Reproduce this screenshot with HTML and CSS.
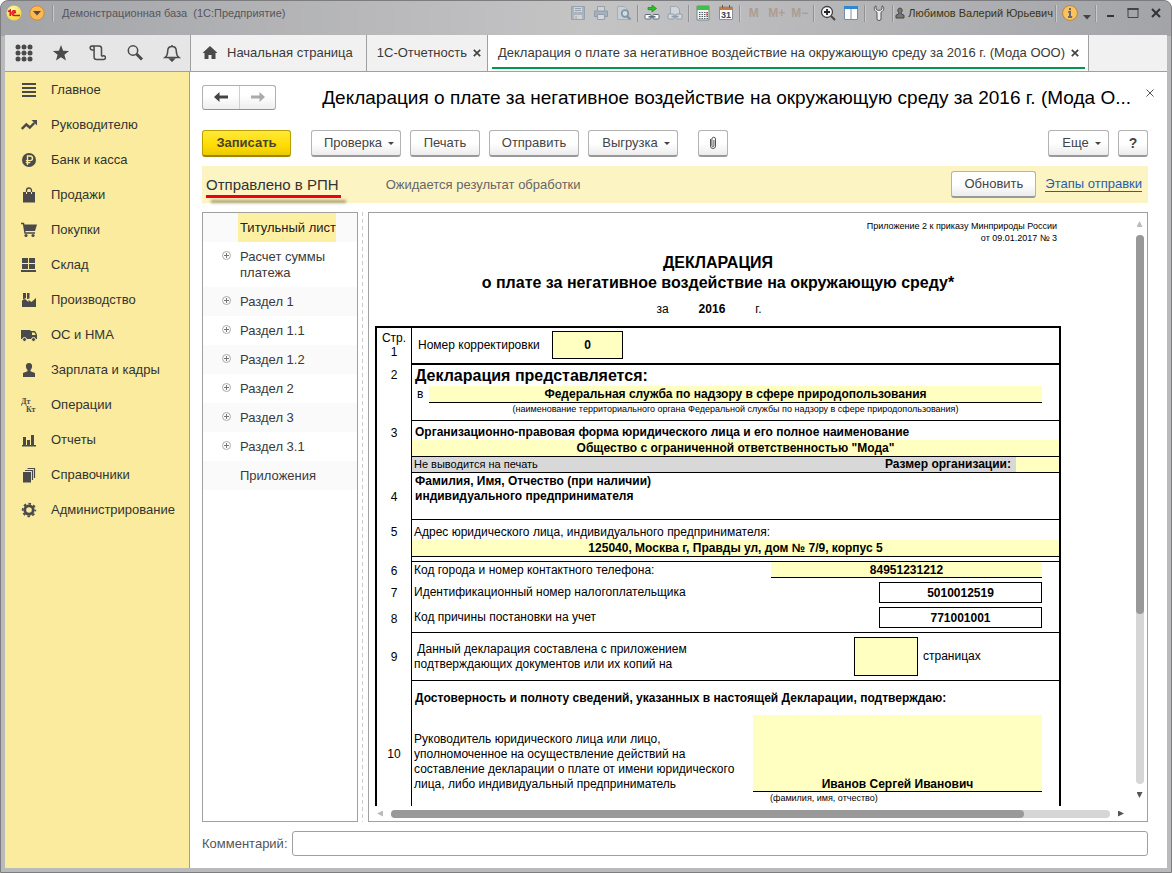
FILE: index.html
```html
<!DOCTYPE html>
<html lang="ru">
<head>
<meta charset="utf-8">
<title>Демонстрационная база (1С:Предприятие)</title>
<link rel="stylesheet" href="styles.css">
</head>
<body>
<div class="window">
  <header class="titlebar">
    <svg class="logo" viewBox="0 0 16 16" width="16" height="16"><defs><radialGradient id="lg" cx=".4" cy=".3" r=".8"><stop offset="0" stop-color="#fffbb0"/><stop offset="1" stop-color="#f5cf1e"/></radialGradient></defs><circle cx="8" cy="8" r="7.5" fill="url(#lg)"/><path d="M2 6.700 4.200 5.200v5.800M9.800 6.500a2.300 2.300 0 1 0-1.800 3.900h6M9.500 8.200A.9.9 0 1 0 8.300 9" fill="none" stroke="#d8141c" stroke-width="1.500"/></svg>
    <button class="round" aria-label="Главное меню"><svg viewBox="0 0 16 16" width="16" height="16"><circle cx="8" cy="8" r="7.200" fill="#fbb954" stroke="#c98a3a"/><path d="M4 6h8L8 10.500z" fill="#5a4a3a"/></svg></button>
    <span class="sep"></span>
    <span class="app-name">Демонстрационная база&nbsp; (1С:Предприятие)</span>
    <div class="tools">
      <button class="tool faded" aria-label="Сохранить"><svg viewBox="0 0 16 16" width="16" height="16"><path d="M1.500 1.500h13v13h-13z" fill="#a3b1bf" stroke="#8a9bab"/><path d="M4 2h8v5H4zM4 10h8v4H4z" fill="#d3d8dd"/><path d="M5 3.500h6M5 5.500h6M6 11v3" stroke="#8a9bab"/></svg></button>
      <button class="tool faded" aria-label="Печать"><svg viewBox="0 0 16 16" width="16" height="16"><path d="M4.500 6V1.500h7V6" fill="#d3d8dd" stroke="#8a97a5"/><path d="M1.500 6h13v5.500h-13z" fill="#a0adba" stroke="#8393a2"/><path d="M4.500 9.500h7v5h-7z" fill="#d9dde1" stroke="#8a97a5"/></svg></button>
      <button class="tool faded" aria-label="Просмотр"><svg viewBox="0 0 16 16" width="16" height="16"><path d="M1.500 1.500h7l3 3v10h-10z" fill="#c9d2d9" stroke="#9aabb8"/><circle cx="9" cy="8.500" r="3.300" fill="#d5e2ea" stroke="#71899a" stroke-width="1.700"/><path d="m11 11 3.500 3.500" stroke="#71899a" stroke-width="2.200"/></svg></button>
      <span class="sep"></span>
      <button class="tool" aria-label="Получить ссылку"><svg viewBox="0 0 16 16" width="16" height="16"><path d="M4 2.500h4V0l4.500 3.500L8 7V4.700H4z" fill="#27c427" stroke="#147a14" stroke-width=".6"/><rect x="1" y="9.500" width="6" height="4.500" rx="1" fill="#fff" stroke="#5d6c7c"/><rect x="9" y="9.500" width="6" height="4.500" rx="1" fill="#fff" stroke="#5d6c7c"/><path d="M4.500 11.800h7" stroke="#5d6c7c" stroke-width="1.500"/></svg></button>
      <button class="tool faded" aria-label="Перейти по ссылке"><svg viewBox="0 0 16 16" width="16" height="16"><path d="M3.500 9V1.500h6l3 2.500v5" fill="#d6dce1" stroke="#94a2b0"/><rect x="1" y="9" width="6" height="5" rx="1" fill="#dde1e5" stroke="#8293a4"/><rect x="9" y="9" width="6" height="5" rx="1" fill="#dde1e5" stroke="#8293a4"/><path d="M4.500 11.500h7" stroke="#8293a4" stroke-width="1.500"/></svg></button>
      <span class="sep"></span>
      <button class="tool" aria-label="Калькулятор"><svg viewBox="0 0 16 16" width="16" height="16"><path d="M2 1h12v14H2z" fill="#f3f3f3" stroke="#74897a"/><path d="M2 1h12v4H2z" fill="#3fbf4c"/><path d="M4 7.500h9M4 9.500h9M4 11.500h9M4 13.500h9" stroke="#53606a" stroke-dasharray="1.500 1"/><path d="M12 7v4" stroke="#e04b3a"/></svg></button>
      <button class="tool" aria-label="Календарь"><svg viewBox="0 0 16 16" width="16" height="16"><path d="M1.500 2h13v12.500h-13z" fill="#fff" stroke="#8a8f96"/><path d="M1.500 2h13v3h-13z" fill="#c9783f"/><path d="M4.500 0v3M11.500 0v3" stroke="#8a5430"/><text x="8" y="13" text-anchor="middle" class="cal">31</text></svg></button>
      <span class="sep"></span>
      <button class="tool mem">M</button><button class="tool mem">M+</button><button class="tool mem">M−</button>
      <span class="sep"></span>
      <button class="tool" aria-label="Масштаб"><svg viewBox="0 0 16 16" width="16" height="16"><circle cx="7" cy="7" r="5.500" fill="#f6f6f6" stroke="#444" stroke-width="1.300"/><path d="M4 7h6M7 4v6" stroke="#222" stroke-width="1.800"/><path d="m11 11 4 4" stroke="#444" stroke-width="2"/></svg></button>
      <button class="tool" aria-label="Панели"><svg viewBox="0 0 16 16" width="16" height="16"><path d="M1.500 1.500h13v13h-13z" fill="#fff" stroke="#6d8faa"/><path d="M1 1h14v3H1z" fill="#3487cf"/><path d="M8 4v11" stroke="#7d93a5"/></svg></button>
      <span class="sep"></span>
      <button class="tool" aria-label="Настройки"><svg viewBox="0 0 16 16" width="16" height="16"><path d="M5 .8C2.500 1.800 2.500 5.500 6 7.300V14q0 1.500 2 1.500t2-1.500V7.300c3.500-1.800 3.500-5.500 1-6.500V4L9.500 5.200h-3L5 4z" fill="#eee" stroke="#555"/></svg></button>
      <span class="sep"></span>
      <button class="user"><svg viewBox="0 0 10 12" width="10" height="12"><path d="M5 1a2.200 2.500 0 0 1 1.300 4.500V7L9 8.200V11H1V8.200L3.700 7V5.500A2.200 2.500 0 0 1 5 1z" fill="#777" stroke="#444"/></svg><span>Любимов Валерий Юрьевич</span></button>
      <span class="sep"></span>
      <button class="tool" aria-label="Справка"><svg viewBox="0 0 16 16" width="16" height="16"><circle cx="8" cy="8" r="7.400" fill="#fbc35f" stroke="#b98637"/><path d="M8 3v2.200M6.300 7H8v5M6 12h4.200" fill="none" stroke="#6a6a6a" stroke-width="2"/></svg></button>
      <button class="more" aria-label="Ещё"><svg viewBox="0 0 8 5" width="8" height="5"><path d="M0 0h8L4 4.500z" fill="#444"/></svg></button>
      <span class="sep"></span>
      <button class="tool" aria-label="Свернуть"><svg viewBox="0 0 12 12" width="12" height="12"><path d="M3 9h7" stroke="#333" stroke-width="2"/></svg></button>
      <button class="tool" aria-label="Развернуть"><svg viewBox="0 0 12 12" width="12" height="12"><path d="M1 1.500h10v9H1z" fill="none" stroke="#444"/><path d="M.5 2h11" stroke="#444" stroke-width="2"/></svg></button>
      <button class="tool" aria-label="Закрыть"><svg viewBox="0 0 12 12" width="12" height="12"><path d="m2 2 8 8M10 2l-8 8" stroke="#333" stroke-width="2"/></svg></button>
    </div>
  </header>

  <nav class="tabs">
    <div class="quick">
      <button aria-label="Разделы"><svg viewBox="0 0 18 18" width="18" height="18" fill="#4a4a4a"><circle cx="3" cy="3" r="2.500"/><circle cx="9" cy="3" r="2.500"/><circle cx="15" cy="3" r="2.500"/><circle cx="3" cy="9" r="2.500"/><circle cx="9" cy="9" r="2.500"/><circle cx="15" cy="9" r="2.500"/><circle cx="3" cy="15" r="2.500"/><circle cx="9" cy="15" r="2.500"/><circle cx="15" cy="15" r="2.500"/></svg></button>
      <button aria-label="Избранное"><svg viewBox="0 0 18 18" width="18" height="18"><path d="m9 1 2.100 5.700 6 .3-4.700 3.700L14 16.500 9 13.200 4 16.500l1.600-5.800L.9 7l6-.3z" fill="#4a4a4a"/></svg></button>
      <button aria-label="История"><svg viewBox="0 0 18 18" width="18" height="18" fill="none" stroke="#4a4a4a" stroke-width="1.500"><path d="M5 6H3.200a2 2 0 1 1 1.900-2.500V13a2.500 2.500 0 0 0 2.500 2.500h7a1.900 1.900 0 1 0-1.800-2.600M3.200 2H10a2.500 2.500 0 0 1 2.500 2.500V12"/></svg></button>
      <button aria-label="Поиск"><svg viewBox="0 0 18 18" width="18" height="18" fill="none" stroke="#4a4a4a"><circle cx="7" cy="6.500" r="4.700" stroke-width="1.500"/><path d="m10.500 10 5.500 5.500" stroke-width="3"/></svg></button>
      <button aria-label="Оповещения"><svg viewBox="0 0 18 18" width="18" height="18" fill="none" stroke="#4a4a4a" stroke-width="1.500"><path d="M9 2.500c-3 0-4.300 2.200-4.300 4.700 0 3.500-1 5-2.700 6.300h14c-1.700-1.300-2.700-2.800-2.700-6.300 0-2.500-1.300-4.700-4.300-4.700zM9 1v1.500"/><path d="M7 15h4l-2 2z" fill="#4a4a4a"/></svg></button>
    </div>
    <a class="tab home" href="#"><svg viewBox="0 0 16 14" width="16" height="14"><path d="M8 0 .5 7h2v6h4V9h3v4h4V7h2z" fill="#4a4a4a"/></svg>Начальная страница</a>
    <div class="tab"><a href="#">1С-Отчетность</a><button class="tab-x" aria-label="Закрыть вкладку"><svg viewBox="0 0 8 8" width="8" height="8"><path d="m.8.800 6.400 6.400M7.200.8.800 7.200" stroke="#444" stroke-width="1.700"/></svg></button></div>
    <div class="tab active"><a href="#">Декларация о плате за негативное воздействие на окружающую среду за 2016 г. (Мода ООО)</a><button class="tab-x" aria-label="Закрыть вкладку"><svg viewBox="0 0 8 8" width="8" height="8"><path d="m.8.800 6.400 6.400M7.200.8.800 7.200" stroke="#444" stroke-width="1.700"/></svg></button></div>
  </nav>

  <div class="body">
    <nav class="sidebar">
      <a href="#"><svg viewBox="0 0 16 16"><path d="M1 2h14M1 6h14M1 10h14M1 14h14" stroke="#4a4a4a" stroke-width="2"/></svg>Главное</a>
      <a href="#"><svg viewBox="0 0 16 16"><path d="m.8 12 4.500-4.500 3.500 3 4.500-4.500" fill="none" stroke="#4a4a4a" stroke-width="2.400"/><path d="M10.500 3H16v5.500z" fill="#4a4a4a"/></svg>Руководителю</a>
      <a href="#"><svg viewBox="0 0 16 16"><circle cx="8" cy="8" r="7" fill="#4a4a4a"/><path d="M6.500 13V4h2.700a2.200 2.200 0 0 1 0 4.600H4.800M4.800 10.600h4.500" fill="none" stroke="#faeb9e" stroke-width="1.400"/></svg>Банк и касса</a>
      <a href="#"><svg viewBox="0 0 16 16"><path d="M2 5h12v10.500H2z" fill="#4a4a4a"/><path d="M5.500 8V3.500a2.500 2.500 0 0 1 5 0V8" fill="none" stroke="#4a4a4a" stroke-width="1.300"/><path d="M5.500 5v2M10.500 5v2" stroke="#faeb9e"/></svg>Продажи</a>
      <a href="#"><svg viewBox="0 0 16 16"><path d="M0 1.500h2.500L4 11h10" fill="none" stroke="#4a4a4a" stroke-width="1.400"/><path d="M2.500 2.500H16L14 9H4z" fill="#4a4a4a"/><circle cx="5" cy="13.500" r="1.600" fill="#4a4a4a"/><circle cx="12" cy="13.500" r="1.600" fill="#4a4a4a"/></svg>Покупки</a>
      <a href="#"><svg viewBox="0 0 16 16"><path d="M1 1h6v5H1zM8 1h6v5H8zM1 7h6v5H1zM8 7h6v5H8zM0 13h15v2H0z" fill="#4a4a4a"/></svg>Склад</a>
      <a href="#"><svg viewBox="0 0 16 16"><path d="M1 15V8.500L4 7l3.500 3V8l3 2L15 6v9zM2 1h3v5L2 7.500zM6 1h2.500v5.500L6 7z" fill="#4a4a4a"/></svg>Производство</a>
      <a href="#"><svg viewBox="0 0 16 16"><path d="M0 3h9.500v9H0zM9.500 4H14l2 3.500V12H9.500z" fill="#4a4a4a"/><path d="M11 5.500h2.300L14.800 8H11z" fill="#faeb9e"/><g fill="#4a4a4a" stroke="#faeb9e"><circle cx="3.500" cy="12.500" r="2"/><circle cx="12.500" cy="12.500" r="2"/></g></svg>ОС и НМА</a>
      <a href="#"><svg viewBox="0 0 16 16"><path d="M8 1c2.200 0 3.300 1.700 3.100 3.600C11 6.300 10 7.500 9.500 8v1.200L14 11v4H2v-4l4.500-1.800V8C6 7.500 5 6.300 4.900 4.600 4.700 2.700 5.800 1 8 1z" fill="#4a4a4a"/></svg>Зарплата и кадры</a>
      <a href="#"><svg viewBox="0 0 16 16"><text x="0" y="7" class="dk">Дт</text><text x="5" y="15" class="dk">Кт</text></svg>Операции</a>
      <a href="#"><svg viewBox="0 0 16 16"><path d="M1 13h14v1.500H1zM2 5h3v8H2zM6 8h3v5H6zM10 3h3v10h-3z" fill="#4a4a4a"/></svg>Отчеты</a>
      <a href="#"><svg viewBox="0 0 16 16"><path d="M2 5h8v10.500H2z" fill="#4a4a4a"/><path d="M4 3.500h7.500V13M6.500 1.500h7V11" fill="none" stroke="#4a4a4a" stroke-width="1.200"/></svg>Справочники</a>
      <a href="#"><svg viewBox="0 0 16 16"><circle cx="8" cy="8" r="4.200" fill="none" stroke="#4a4a4a" stroke-width="2.800"/><circle cx="8" cy="8" r="6.300" fill="none" stroke="#4a4a4a" stroke-width="1.800" stroke-dasharray="2.600 2.350" stroke-dashoffset="1.300"/></svg>Администрирование</a>
    </nav>

    <main class="main">
      <div class="heading">
        <div class="history">
          <button aria-label="Назад"><svg viewBox="0 0 14 10" width="14" height="10"><path d="M0 5 5.500 0v3.600H14v2.800H5.500V10z" fill="#444"/></svg></button>
          <button aria-label="Вперед"><svg viewBox="0 0 14 10" width="14" height="10"><path d="M14 5 8.500 0v3.600H0v2.800h8.500V10z" fill="#aaa"/></svg></button>
        </div>
        <h1>Декларация о плате за негативное воздействие на окружающую среду за 2016 г. (Мода О...</h1>
        <button class="form-x" aria-label="Закрыть"><svg viewBox="0 0 8 8" width="8" height="8"><path d="m.5.500 7 7M7.500.500l-7 7" stroke="#555"/></svg></button>
      </div>

      <div class="toolbar">
        <button class="btn primary">Записать</button>
        <span class="space"></span>
        <button class="btn wide menu">Проверка<i class="caret"></i></button>
        <button class="btn">Печать</button>
        <button class="btn wide">Отправить</button>
        <button class="btn wide menu">Выгрузка<i class="caret"></i></button>
        <span class="space"></span>
        <button class="btn square" aria-label="Файлы"><svg viewBox="0 0 8 14" width="8" height="14"><path d="M1.500 3v7a2.500 2.500 0 0 0 5 0V3a1.800 1.800 0 0 0-3.600 0v6.500a1 1 0 0 0 2 0V4" fill="none" stroke="#555"/></svg></button>
        <span class="grow"></span>
        <button class="btn small menu">Еще<i class="caret"></i></button>
        <button class="btn square help">?</button>
      </div>

      <div class="status">
        <strong>Отправлено в РПН</strong>
        <span>Ожидается результат обработки</span>
        <button class="btn refresh">Обновить</button>
        <a href="#">Этапы отправки</a>
      </div>

      <div class="split">
        <ul class="tree">
          <li class="leaf selected"><span>Титульный лист</span></li>
          <li><button class="plus" aria-label="Развернуть"></button><span>Расчет суммы<br>платежа</span></li>
          <li><button class="plus" aria-label="Развернуть"></button><span>Раздел 1</span></li>
          <li><button class="plus" aria-label="Развернуть"></button><span>Раздел 1.1</span></li>
          <li><button class="plus" aria-label="Развернуть"></button><span>Раздел 1.2</span></li>
          <li><button class="plus" aria-label="Развернуть"></button><span>Раздел 2</span></li>
          <li><button class="plus" aria-label="Развернуть"></button><span>Раздел 3</span></li>
          <li><button class="plus" aria-label="Развернуть"></button><span>Раздел 3.1</span></li>
          <li class="leaf"><span>Приложения</span></li>
        </ul>
        <div class="splitter"></div>
        <section class="doc">
          <div class="view">
            <div class="sheet">
              <p class="appendix">Приложение 2 к приказу Минприроды России<br>от 09.01.2017 № 3</p>
              <h2>ДЕКЛАРАЦИЯ<br>о плате за негативное воздействие на окружающую среду*</h2>
              <p class="year"><span>за</span><b>2016</b><span>г.</span></p>
              <table class="form">
                <tr class="r1"><th class="top">Стр.<br>1</th><td><div class="line"><label for="corr">Номер корректировки</label><input id="corr" class="box corr" value="0"></div></td></tr>
                <tr class="r2"><th class="top">2</th><td><h3>Декларация представляется:</h3><div class="line"><label class="in" for="org">в</label><input id="org" class="under grow" value="Федеральная служба по надзору в сфере природопользования"></div><small>(наименование территориального органа Федеральной службы по надзору в сфере природопользования)</small></td></tr>
                <tr class="r3"><th class="top">3</th><td><label class="cap bold" for="name">Организационно-правовая форма юридического лица и его полное наименование</label><input id="name" class="full" value="Общество с ограниченной ответственностью &quot;Мода&quot;"></td></tr>
                <tr class="size"><th></th><td><div class="line"><span class="noprint">Не выводится на печать</span><label class="bold" for="size">Размер организации:</label><input id="size"></div></td></tr>
                <tr class="r4"><th>4</th><td class="bold text">Фамилия, Имя, Отчество (при наличии)<br>индивидуального предпринимателя</td></tr>
                <tr class="r5"><th class="top">5</th><td><label class="cap" for="addr">Адрес юридического лица, индивидуального предпринимателя:</label><input id="addr" class="full" value="125040, Москва г, Правды ул, дом № 7/9, корпус 5"></td></tr>
                <tr class="gap"><th></th><td></td></tr>
                <tr class="r6 open"><th>6</th><td><div class="line between"><label for="tel">Код города и номер контактного телефона:</label><input id="tel" class="under tel" value="84951231212"></div></td></tr>
                <tr class="r7 open"><th>7</th><td><div class="line between"><label for="inn">Идентификационный номер налогоплательщика</label><input id="inn" class="box code" value="5010012519"></div></td></tr>
                <tr class="r8"><th>8</th><td><div class="line between"><label for="kpp">Код причины постановки на учет</label><input id="kpp" class="box code" value="771001001"></div></td></tr>
                <tr class="r9"><th>9</th><td><div class="line"><label class="attach" for="pages">&nbsp;Данный декларация составлена с приложением<br>подтверждающих документов или их копий на</label><input id="pages" class="box pages"><span>страницах</span></div></td></tr>
                <tr class="r10 open"><th>10</th><td><p class="bold confirm">Достоверность и полноту сведений, указанных в настоящей Декларации, подтверждаю:</p><div class="line between sign"><label for="head">Руководитель юридического лица или лицо,<br>уполномоченное на осуществление действий на<br>составление декларации о плате от имени юридического<br>лица, либо индивидуальный предприниматель</label><div class="signer"><input id="head" value="Иванов Сергей Иванович"><small>(фамилия, имя, отчество)</small></div></div></td></tr>
              </table>
            </div>
          </div>
          <div class="bar vertical"><i class="arrow up"></i><div class="track"><div class="thumb"></div></div><i class="arrow down"></i></div>
          <div class="bar horizontal"><i class="arrow left"></i><div class="track"><div class="thumb"></div></div><i class="arrow right"></i></div>
        </section>
      </div>

      <div class="comment"><label for="comment">Комментарий:</label><input id="comment" type="text"></div>
    </main>
  </div>
</div>
</body>
</html>
```
FILE: styles.css
```css
* { box-sizing: border-box; }
body { margin: 0; background: #fff; font: 13px/16px "Liberation Sans", Arial, sans-serif; color: #3a3a3a; }
button, input { font: inherit; color: inherit; margin: 0; padding: 0; border: 0; background: none; }
button { display: flex; align-items: center; justify-content: center; }
a { color: inherit; text-decoration: none; }
h1, h2, h3, p, ul { margin: 0; padding: 0; font-weight: normal; }
svg { display: block; flex: none; }
.grow { flex: 1; }
.bold { font-weight: bold; }

.window {
  display: flex; flex-direction: column; height: 100vh; padding: 0 4px 4px;
  border: 1px solid #7d7d7f; border-radius: 8px 8px 0 0;
  background: linear-gradient(90deg, #a3a4a8, #c4c4c5 50%, #a3a4a8) 0 0 / 100% 35px no-repeat, #b9babb;
}

/* Title bar */
.titlebar { display: flex; align-items: center; height: 34px; padding: 0 0 10px 1px; font-size: 11px; color: #505055; }
.sep { width: 1px; height: 17px; margin: 0 2px; background: #929295; box-shadow: 1px 0 #c9c9cb; }
.round { margin: 0 4px 0 7px; }
.titlebar > .sep { margin: 0 9px 0 3px; }
.app-name { white-space: nowrap; color: #55565a; }
.tools { display: flex; align-items: center; margin-left: auto; }
.tool { width: 23px; height: 20px; }
.faded { opacity: .8; }
.mem { font-weight: bold; font-size: 12px; color: #ad9d92; }
.cal { font: bold 9px "Liberation Sans", sans-serif; fill: #3c4758; }
.user { gap: 3px; white-space: nowrap; color: #3d3410; }
.more { width: 12px; height: 20px; padding-top: 8px; }

/* Tabs */
.tabs { display: flex; height: 37px; border-bottom: 1px solid #a0a0a0; background: #f1f1f1; }
.quick { display: flex; width: 186px; border-right: 1px solid #a0a0a0; background: #e6e6e6; }
.quick button { flex: 1; }
.tab { display: flex; align-items: center; padding: 0 6px 0 10px; border-right: 1px solid #a0a0a0; white-space: nowrap; gap: 6px; }
.home { padding: 0 13px 0 11px; gap: 9px; }
.active { position: relative; padding-right: 9px; background: #fff; }
.active::after { content: ""; position: absolute; left: 4px; right: 3px; bottom: 2px; height: 2px; background: #009a4e; }

/* Body */
.body { display: flex; flex: 1; min-height: 0; background: #fff; }
.sidebar { width: 185px; border-right: 1px solid #b5a83b; background: #faeb9e; }
.sidebar a { display: flex; align-items: center; gap: 14px; height: 35px; padding: 1px 0 0 16px; white-space: nowrap; color: #333; }
.sidebar svg { width: 16px; height: 16px; }
.dk { font: bold 8px "Liberation Serif", serif; fill: #4a4a4a; }
.main { display: flex; flex-direction: column; flex: 1; min-width: 0; padding: 12px 19px 12px 12px; }

.heading { position: relative; display: flex; align-items: center; justify-content: space-between; height: 26px; padding-right: 17px; }
.history { display: flex; border: 1px solid #b0b0b0; border-bottom-color: #929292; border-radius: 3px; background: linear-gradient(#fff 40%, #eee); }
.history button { width: 36px; height: 23px; }
.history button + button { border-left: 1px solid #cfcfcf; }
h1 { padding-top: 2px; font-size: 19px; line-height: 26px; color: #000; white-space: nowrap; }
.form-x { position: absolute; right: -6px; top: 5px; }

.toolbar { display: flex; gap: 9px; margin-top: 20px; }
.space { width: 2px; }
.btn { min-width: 70px; height: 27px; border: 1px solid #b3b3b3; border-bottom: 2px solid #999; border-radius: 3px; background: linear-gradient(#fff 50%, #ececec); color: #444; }
.wide { min-width: 90px; }
.primary { min-width: 89px; border-color: #b9a000; border-bottom-color: #9a8600; background: linear-gradient(#ffe93b, #ffdc00 60%, #ebcb00); font-weight: bold; color: #4a4432; }
.menu { padding-left: 6px; }
.small { min-width: 61px; }
.square { min-width: 30px; }
.help { font-weight: bold; font-size: 14px; }
.caret { margin-left: 6px; border: 3px solid transparent; border-top-color: #444; border-bottom: 0; }

.status { display: flex; align-items: center; height: 37px; margin-top: 9px; padding: 0 6px 0 4px; background: #fcf4c3; }
.status strong { position: relative; font-size: 15px; font-weight: normal; color: #333; }
.status strong::after { content: ""; position: absolute; left: 0; right: -2px; top: 18px; height: 3px; background: #f0000c; box-shadow: 5px 5px 3px rgba(80, 75, 40, .5); }
.status span { margin-left: 47px; color: #666; }
.refresh { min-width: 85px; margin-left: auto; }
.status a { margin-left: 9px; border-bottom: 1px solid #2a5db0; line-height: 14px; color: #2a5db0; }

/* Tree and document */
.split { display: flex; flex: 1; min-height: 0; margin-top: 9px; }
.tree { flex: none; width: 156px; border: 1px solid #a0a0a0; list-style: none; }
.tree li { display: flex; padding-left: 16px; }
.tree li:nth-child(odd) { background: #fafafa; }
.tree span { padding: 7px 0 6px 2px; white-space: nowrap; }
.tree .leaf { padding-left: 35px; }
.tree .selected span { background: #fdf0a3; color: #222; }
.plus { flex: none; width: 9px; height: 9px; margin: 9px 7px 0 3px; border: 1px solid #aaa; border-radius: 50%; background: linear-gradient(#777, #777) center / 5px 1px no-repeat, linear-gradient(#777, #777) center / 1px 5px no-repeat; }
.splitter { width: 1px; margin: 0 5px 0 4px; background: repeating-linear-gradient(#ccc 0 4px, transparent 4px 7px); }
.doc { display: grid; grid-template: 1fr 15px / 1fr 15px; flex: 1; min-width: 0; border: 1px solid #a0a0a0; }
.view { min-width: 0; min-height: 0; overflow: hidden; padding-left: 6px; }
.sheet { width: 686px; color: #000; font-size: 12px; line-height: 15px; }
.appendix { padding: 7px 4px 0 0; text-align: right; font-size: 9px; line-height: 12px; }
h2 { margin-top: 9px; text-align: center; font-size: 16px; line-height: 20px; font-weight: bold; }
.year { display: flex; justify-content: center; gap: 30px; margin: 9px 0; padding-right: 18px; }

.form { width: 100%; border: 2px solid #000; border-bottom: 0; border-spacing: 0; }
.form th { width: 34px; padding: 0; font-weight: normal; line-height: 14px; }
.form .top { padding-top: 3px; vertical-align: top; }
.form td { padding: 0; border-left: 1px solid #000; border-bottom: 1px solid #000; vertical-align: top; }
.form .open td { border-bottom: 0; }
.form input { min-width: 0; background: #ffffc1; text-align: center; font-weight: bold; height: 16px; border-radius: 0; }
.line { display: flex; align-items: center; }
.between { justify-content: space-between; padding: 0 17px 0 2px; }
.form .box { border: 1px solid #000; }
.form .under { height: 17px; border-bottom: 1px solid #000; }
.form .full, .cap { display: block; width: 100%; }
.cap { padding: 3px 0 0 3px; line-height: 16px; }
.form small { display: block; font-size: 9px; line-height: 12px; text-align: center; }
.r1 td { height: 37px; border-bottom-width: 2px !important; }
.r1 .line { height: 34px; padding-left: 6px; }
.r1 label { width: 134px; }
.form .corr { width: 71px; height: 28px; }
.r2 td { height: 56px; }
h3 { padding: 1px 0 0 3px; font-size: 16px; line-height: 20px; font-weight: bold; }
.r2 .line { padding: 0 17px 0 5px; }
.in { width: 12px; }
.form .r3 .top, .form .r5 .top { padding-top: 5px; }
.size .line { height: 15px; gap: 5px; background: #d8d8d8; }
.noprint { margin-right: auto; padding-left: 2px; font-size: 11px; }
.form #size { width: 43px; height: 15px; }
.r4 td { height: 47px; padding: 1px 0 0 3px; }
.r5 .cap { padding: 4px 0 0 2px; }
.gap td { height: 5px; }
.r6 td { height: 18px; }
.form .tel { width: 271px; height: 16px; }
.r7 td { height: 25px; padding-top: 2px; }
.r8 td { height: 28px; padding-top: 2px; }
.form .code { width: 163px; height: 21px; background: #fff; }
.r9 td { height: 48px; }
.r9 .line { height: 47px; padding-left: 2px; gap: 5px; }
.attach { width: 435px; }
.form .pages { width: 64px; height: 39px; }
.r10 td { height: 130px; }
.r10 th { padding-top: 16px; }
.confirm { padding: 10px 0 9px 3px; }
.sign { align-items: flex-start; }
.sign label { padding-top: 17px; white-space: nowrap; }
.signer { width: 289px; }
.signer input { display: block; width: 100%; height: 77px; padding-top: 61px; border-bottom: 1px solid #000; }
.signer small { padding-left: 17px; text-align: left; }

/* Scroll bars */
.bar { display: flex; align-items: center; }
.vertical { flex-direction: column; }
.horizontal { grid-column: 1; }
.track { flex: 1; border-radius: 4px; background: #d6d6d6; }
.thumb { border-radius: 4px; background: #999; }
.vertical .track { width: 8px; }
.vertical .thumb { height: 69%; }
.horizontal .track { height: 8px; }
.horizontal .thumb { width: 88%; height: 8px; }
.arrow { flex: none; width: 6px; height: 6px; margin: 8px; background: #555; }
.up { background: #bbb; clip-path: polygon(0 100%, 50% 0, 100% 100%); }
.down { clip-path: polygon(0 0, 50% 100%, 100% 0); }
.left { background: #bbb; clip-path: polygon(100% 0, 0 50%, 100% 100%); }
.right { clip-path: polygon(0 0, 100% 50%, 0 100%); }

.comment { display: flex; align-items: center; gap: 4px; margin-top: 9px; }
.comment label { color: #555; }
.comment input { flex: 1; height: 25px; padding: 0 6px; border: 1px solid #a0a0a0; border-radius: 3px; background: #fff; }
```
